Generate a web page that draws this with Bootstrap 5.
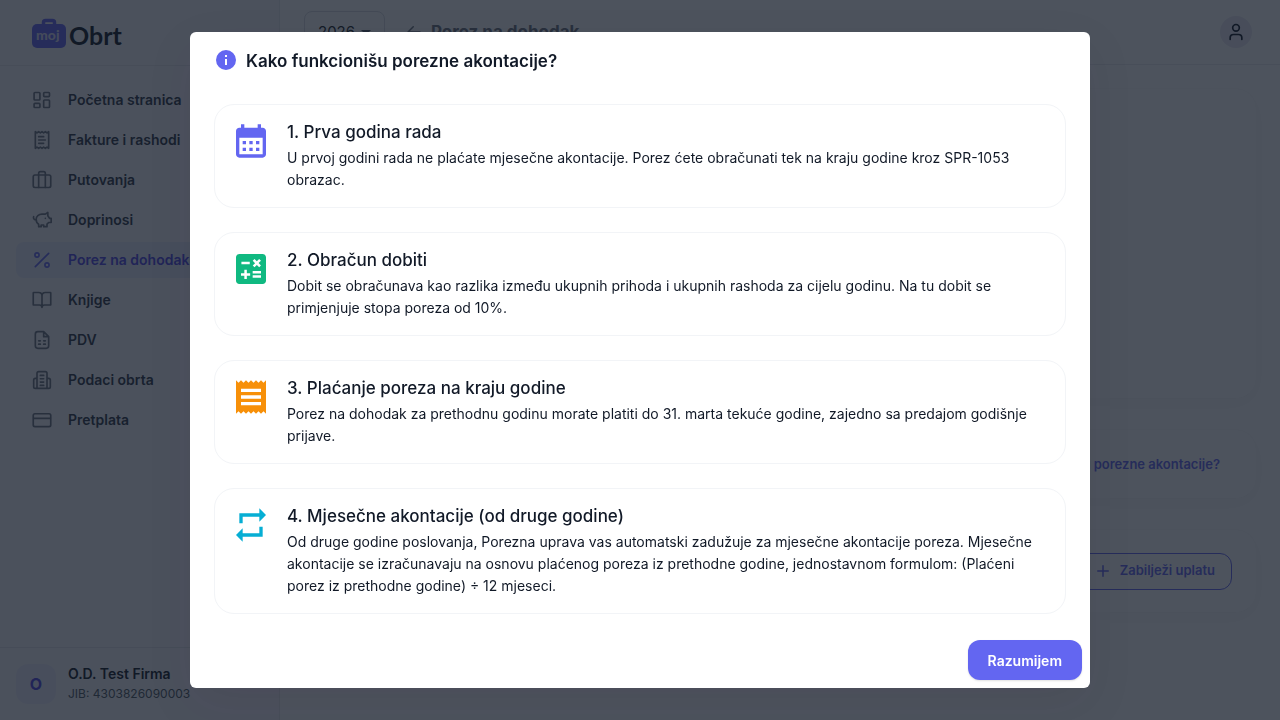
<!DOCTYPE html>
<html lang="bs">
<head>
<meta charset="utf-8">
<meta name="viewport" content="width=device-width, initial-scale=1">
<title>Porez na dohodak</title>
<link href="https://cdn.jsdelivr.net/npm/bootstrap@5.3.0/dist/css/bootstrap.min.css" rel="stylesheet">
<style>
  body { font-family: Inter, "Liberation Sans", sans-serif; font-size: 14px; line-height: 22px; color: #111927; }
  .sidebar { width: 280px; background: #f8f7fc; border-right: 1px solid #e8e9ee; }
  .brand-bar { height: 66px; padding: 2px 32px 0; border-bottom: 1px solid #e6e7ec; }
  .side-nav { gap: 4px; padding: 16px; }
  .side-nav .nav-link { display: flex; align-items: center; gap: 16px; height: 36px; padding: 0 16px; border-radius: 8px; color: #2f3746; font-weight: 600; }
  .side-nav .nav-link svg { color: #6c737f; width: 20px; height: 20px; flex: none; }
  .side-nav .nav-link.active { background: #e6ebfb; color: #4f46e5; }
  .side-nav .nav-link.active svg { color: #6366f1; }
  .stroke-icon { fill: none; stroke: currentColor; stroke-width: 2; stroke-linecap: round; stroke-linejoin: round; }
  .account { padding: 16px 12px 16px 16px; gap: 12px; border-top: 1px solid #e2e4ea; }
  .account-mark { width: 40px; height: 40px; border-radius: 12px; background: #ecebfb; color: #4f46e5; font-size: 16px; font-weight: 700; }
  .account-name { line-height: 20px; font-weight: 600; }
  .account-id { font-size: 12px; line-height: 20px; color: #4d5761; }
  .topbar { height: 65px; padding: 0 28px 0 24px; border-bottom: 1px solid #e9eaee; }
  .year-select { width: 81px; height: 42px; padding: 0 13px; border: 1px solid #d9dbe1; border-radius: 8px; font-size: 15px; background-size: 10px; background-position: right 13px center;
    background-image: url("data:image/svg+xml,%3Csvg xmlns='http://www.w3.org/2000/svg' viewBox='0 0 10 5'%3E%3Cpath d='M0 0h10L5 5z' fill='%234d5761'/%3E%3C/svg%3E"); }
  .back-link { margin: 0 8px 0 20px; color: #6c737f; }
  .page-name { font-size: 17px; line-height: 26px; font-weight: 700; color: #6c737f; }
  .user-btn { width: 32px; height: 32px; background: #e9e8f2; color: #111927; }
  .panel { border: 0; border-radius: 20px; box-shadow: 0 5px 22px rgba(0,0,0,.04), 0 0 1px rgba(0,0,0,.06); }
  .panels { display: flex; flex-direction: column; gap: 32px; padding: 24px; }
  .chart-panel { height: 309px; }
  .info-panel { height: 68px; padding: 0 36px; }
  .pay-panel { height: 82px; padding: 0 24px; }
  .info-link { font-size: 13px; font-weight: 600; color: #6366f1; text-decoration: none; }
  .pay-btn { height: 37px; padding: 0 16px; font-size: 13px; font-weight: 600; color: #6366f1; border: 1px solid #6366f1; border-radius: 12px; }
  .modal-backdrop { --bs-backdrop-bg: #111927; --bs-backdrop-opacity: .75; }
  .modal-dialog { max-width: 900px; margin: 32px auto; }
  .modal-content { border: 0; border-radius: 6px; box-shadow: 0 16px 48px rgba(40,10,40,.08); }
  .modal-header { height: 72px; padding: 16px 24px; border: 0; align-items: flex-start; justify-content: flex-start; gap: 8px; }
  .modal-title { font-size: 17px; line-height: 26px; font-weight: 600; }
  .modal-body { padding: 0 24px 18px; display: flex; flex-direction: column; gap: 24px; }
  .step { display: flex; gap: 16px; padding: 16px; border: 1px solid #f2f4f7; border-radius: 20px; }
  .step svg { flex: none; width: 40px; height: 40px; fill: currentColor; }
  .step h3 { margin: 0 0 4px; font-size: 17px; line-height: 22px; font-weight: 500; }
  .step p { margin: 0; }
  .tone-indigo { color: #6366f1; } .tone-green { color: #10b981; } .tone-orange { color: #f79009; } .tone-cyan { color: #06aed4; }
  .modal-footer { padding: 8px; border: 0; }
  .modal-footer > * { margin: 0; }
  .ok-btn { height: 40px; padding: 0 20px; border: 0; border-radius: 12px; background: #6366f1; color: #fff; font-size: 14px; font-weight: 600; box-shadow: 0 1px 2px rgba(0,0,0,.12); }
  .ok-btn:hover { background: #4f46e5; color: #fff; }
</style>
</head>
<body class="modal-open overflow-hidden">
<div class="d-flex vh-100">
  <aside class="sidebar d-flex flex-column flex-shrink-0">
    <div class="brand-bar d-flex align-items-center">
      <a href="#" aria-label="moj Obrt">
        <svg width="92" height="32" viewBox="0 0 92 32">
          <path d="M11.500 8V4.500q0-2 2-2h7q2 0 2 2V8" fill="none" stroke="#6366f1" stroke-width="3.500"/>
          <rect y="6" width="34" height="24" rx="5" fill="#6366f1"/>
          <text x="4" y="22" font-family="Lato, sans-serif" font-size="14" font-weight="900" fill="#d9d9f5">moj</text>
          <text x="37" y="27" font-family="Lato, sans-serif" font-size="25" font-weight="700" fill="#111927">Obrt</text>
        </svg>
      </a>
    </div>
    <nav class="side-nav nav flex-column flex-nowrap flex-grow-1">
      <a class="nav-link" href="#"><svg class="stroke-icon" viewBox="0 0 24 24"><rect x="2.500" y="3" width="7" height="9" rx="1"/><rect x="14" y="3" width="7" height="5" rx="1"/><rect x="14" y="12" width="7" height="9" rx="1"/><rect x="2.500" y="16" width="7" height="5" rx="1"/></svg>Početna stranica</a>
      <a class="nav-link" href="#"><svg class="stroke-icon" viewBox="0 0 24 24"><path d="M4 2l2 1.500L8 2l2 1.500L12 2l2 1.500L16 2l2 1.500L20 2v20l-2-1.500-2 1.500-2-1.500-2 1.500-2-1.500L8 22l-2-1.500L4 22zM8 8h6M8 12h8M8 16h6"/></svg>Fakture i rashodi</a>
      <a class="nav-link" href="#"><svg class="stroke-icon" viewBox="0 0 24 24"><rect x="1.500" y="6" width="21" height="15" rx="2"/><path d="M8 21V4q0-2 2-2h4q2 0 2 2v17"/></svg>Putovanja</a>
      <a class="nav-link" href="#"><svg class="stroke-icon" viewBox="0 0 24 24"><path d="M5 11c0-3 3-6 7-6h4l3-2v4l2 3h2v5h-3l-2 2v3h-4v-2h-3v2H8v-3c-2-1-3-3-3-6zM5 12c-2 0-4-2-3-4M16 10h.01"/></svg>Doprinosi</a>
      <a class="nav-link active" href="#" aria-current="page"><svg class="stroke-icon" viewBox="0 0 24 24"><path d="M20 4L4 20"/><circle cx="6" cy="6" r="2.500"/><circle cx="18" cy="18" r="2.500"/></svg>Porez na dohodak</a>
      <a class="nav-link" href="#"><svg class="stroke-icon" viewBox="0 0 24 24"><path d="M12 21V7q0-4-4-4H2q-.5 0-.5.500V18h7.500q3 0 3 3zM12 21V7q0-4 4-4h6q.5 0 .5.500V18H15q-3 0-3 3z"/></svg>Knjige</a>
      <a class="nav-link" href="#"><svg class="stroke-icon" viewBox="0 0 24 24"><path d="M14 2H7Q4 2 4 5v14q0 3 3 3h10q3 0 3-3V8zM14 2v6h6M8 13h2m4 0h2M8 17h2m4 0h2"/></svg>PDV</a>
      <a class="nav-link" href="#"><svg class="stroke-icon" viewBox="0 0 24 24"><path d="M6 22V4q0-2 2-2h8q2 0 2 2v18M6 10H4q-2 0-2 2v8q0 2 2 2h16q2 0 2-2v-8q0-2-2-2h-2M10 6.500h4M10 10.500h4M10 14.500h4M10 18.500h4"/></svg>Podaci obrta</a>
      <a class="nav-link" href="#"><svg class="stroke-icon" viewBox="0 0 24 24"><rect x="1.500" y="4.500" width="21" height="15.500" rx="2"/><path d="M2 10h20"/></svg>Pretplata</a>
    </nav>
    <div class="account d-flex align-items-center">
      <div class="account-mark d-flex align-items-center justify-content-center">O</div>
      <div><div class="account-name">O.D. Test Firma</div><div class="account-id">JIB: 4303826090003</div></div>
    </div>
  </aside>
  <div class="flex-grow-1 overflow-hidden">
    <header class="topbar d-flex align-items-center">
      <select class="form-select year-select" aria-label="Godina"><option>2026</option></select>
      <a href="#" class="back-link d-flex" aria-label="Nazad"><svg class="stroke-icon" width="18" height="18" viewBox="0 0 24 24"><path d="M20 12H4m7-7l-7 7 7 7"/></svg></a>
      <h1 class="page-name m-0">Porez na dohodak</h1>
      <button type="button" class="btn user-btn rounded-circle p-0 ms-auto d-flex align-items-center justify-content-center" aria-label="Profil"><svg class="stroke-icon" width="20" height="20" viewBox="0 0 24 24"><circle cx="12" cy="7" r="4"/><path d="M5 21v-2q0-4 4-4h6q4 0 4 4v2"/></svg></button>
    </header>
    <main class="panels">
      <section class="card panel chart-panel"></section>
      <section class="card panel info-panel flex-row align-items-center justify-content-end"><a class="info-link" href="#">Kako funkcionišu porezne akontacije?</a></section>
      <section class="card panel pay-panel flex-row align-items-center justify-content-end"><button type="button" class="btn pay-btn d-flex align-items-center gap-2"><svg class="stroke-icon" width="18" height="18" viewBox="0 0 24 24"><path d="M12 5v14M5 12h14"/></svg>Zabilježi uplatu</button></section>
    </main>
  </div>
</div>

<div class="modal-backdrop show"></div>
<div class="modal show d-block" role="dialog" aria-modal="true" aria-labelledby="taxTitle" tabindex="-1">
  <div class="modal-dialog">
    <div class="modal-content">
      <div class="modal-header">
        <svg width="24" height="24" viewBox="0 0 24 24" fill="#6366f1"><path d="M12 2a10 10 0 1 0 0 20 10 10 0 0 0 0-20zm1 15h-2v-6h2zm0-8h-2V7h2z"/></svg>
        <h2 class="modal-title" id="taxTitle">Kako funkcionišu porezne akontacije?</h2>
      </div>
      <div class="modal-body">
        <section class="step">
          <svg class="tone-indigo" viewBox="0 0 24 24"><path d="M19 4h-1V2h-2v2H8V2H6v2H5c-1.110 0-1.990.900-1.990 2L3 20c0 1.100.890 2 2 2h14c1.100 0 2-.900 2-2V6c0-1.100-.900-2-2-2zm0 16H5V10h14v10zM9 14H7v-2h2v2zm4 0h-2v-2h2v2zm4 0h-2v-2h2v2zm-8 4H7v-2h2v2zm4 0h-2v-2h2v2zm4 0h-2v-2h2v2z"/></svg>
          <div><h3>1. Prva godina rada</h3><p>U prvoj godini rada ne plaćate mjesečne akontacije. Porez ćete obračunati tek na kraju godine kroz SPR-1053 obrazac.</p></div>
        </section>
        <section class="step">
          <svg class="tone-green" viewBox="0 0 24 24"><path d="M19 3H5c-1.100 0-2 .900-2 2v14c0 1.100.900 2 2 2h14c1.100 0 2-.900 2-2V5c0-1.100-.900-2-2-2zm-5.970 4.060L14.090 6l1.410 1.410L16.910 6l1.060 1.060-1.410 1.410 1.410 1.410-1.060 1.060-1.410-1.400-1.410 1.410-1.060-1.060 1.410-1.410-1.410-1.430zm-6.780.660h5v1.500h-5v-1.500zM11.500 16h-2v2H8v-2H6v-1.500h2v-2h1.500v2h2V16zm6.500 1.250h-5v-1.500h5v1.500zm0-2.500h-5v-1.500h5v1.500z"/></svg>
          <div><h3>2. Obračun dobiti</h3><p>Dobit se obračunava kao razlika između ukupnih prihoda i ukupnih rashoda za cijelu godinu. Na tu dobit se primjenjuje stopa poreza od 10%.</p></div>
        </section>
        <section class="step">
          <svg class="tone-orange" viewBox="0 0 24 24"><path d="M18 17H6v-2h12v2zm0-4H6v-2h12v2zm0-4H6V7h12v2zM3 22l1.500-1.500L6 22l1.500-1.500L9 22l1.500-1.500L12 22l1.500-1.500L15 22l1.500-1.500L18 22l1.500-1.500L21 22V2l-1.500 1.500L18 2l-1.500 1.500L15 2l-1.500 1.500L12 2l-1.500 1.500L9 2 7.500 3.500 6 2 4.500 3.500 3 2v20z"/></svg>
          <div><h3>3. Plaćanje poreza na kraju godine</h3><p>Porez na dohodak za prethodnu godinu morate platiti do 31. marta tekuće godine, zajedno sa predajom godišnje prijave.</p></div>
        </section>
        <section class="step">
          <svg class="tone-cyan" viewBox="0 0 24 24"><path d="M7 7h10v3l4-4-4-4v3H5v6h2V7zm10 10H7v-3l-4 4 4 4v-3h12v-6h-2v4z"/></svg>
          <div><h3>4. Mjesečne akontacije (od druge godine)</h3><p>Od druge godine poslovanja, Porezna uprava vas automatski zadužuje za mjesečne akontacije poreza. Mjesečne akontacije se izračunavaju na osnovu plaćenog poreza iz prethodne godine, jednostavnom formulom: (Plaćeni porez iz prethodne godine) ÷ 12 mjeseci.</p></div>
        </section>
      </div>
      <div class="modal-footer"><button type="button" class="btn ok-btn">Razumijem</button></div>
    </div>
  </div>
</div>
<script src="https://cdn.jsdelivr.net/npm/bootstrap@5.3.0/dist/js/bootstrap.bundle.min.js"></script>
</body>
</html>
